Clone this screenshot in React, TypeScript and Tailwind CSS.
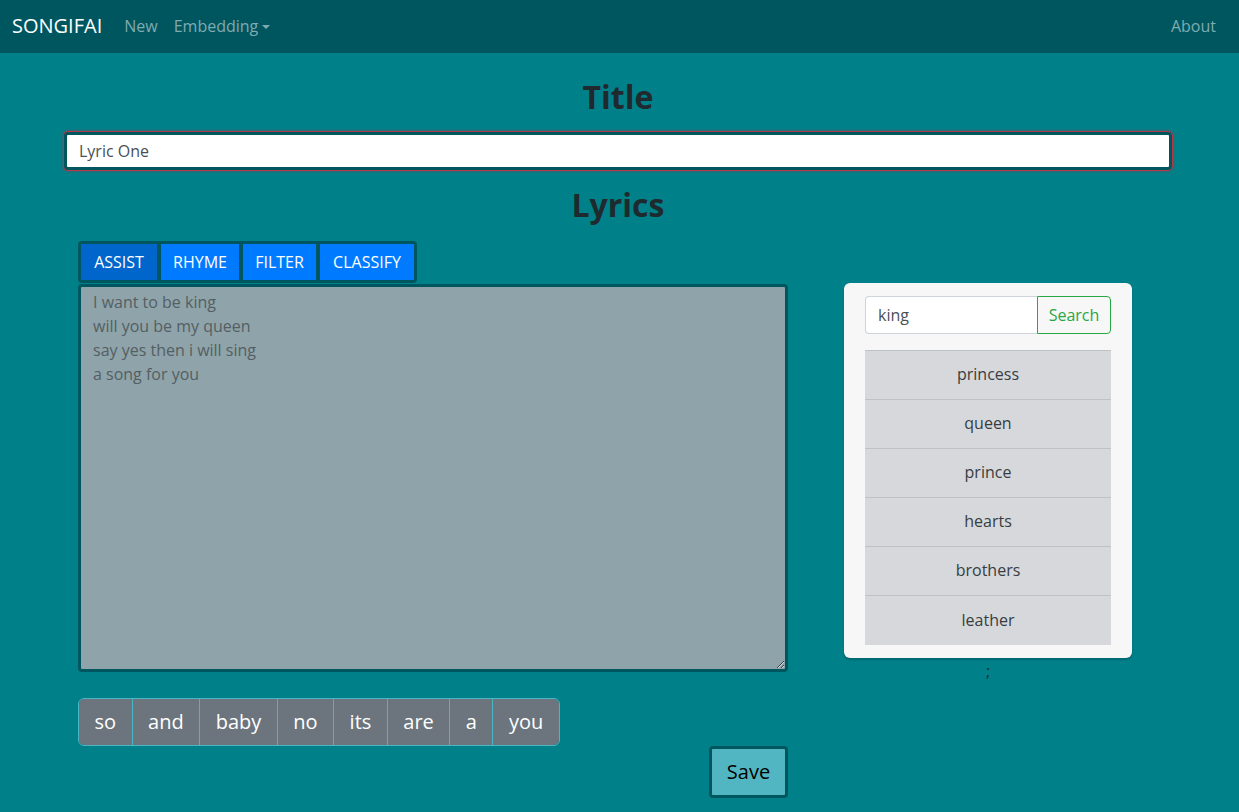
import { useState } from "react";

const similar = ["princess", "queen", "prince", "hearts", "brothers", "leather"];
const suggestions = ["so", "and", "baby", "no", "its", "are", "a", "you"];
const tabs = [
  { label: "ASSIST", w: "w-[76px]" },
  { label: "RHYME", w: "w-[78px]" },
  { label: "FILTER", w: "w-[73px]" },
  { label: "CLASSIFY", w: "w-[94px]" },
];

function NavBar() {
  return (
    <nav className="flex h-[53px] items-center justify-between bg-[#00565f] pb-[2px] pl-3 pr-[23px]">
      <div className="flex items-center">
        <span className="mr-[22px] text-xl text-white">SONGIFAI</span>
        <span className="mr-4 text-base text-[#7fabb0]">New</span>
        <span className="flex items-center text-base text-[#7fabb0]">
          Embedding
          <span className="ml-1 mt-[2px] h-0 w-0 border-x-4 border-t-4 border-x-transparent border-t-[#7fabb0]" />
        </span>
      </div>
      <span className="text-base text-[#7fabb0]">About</span>
    </nav>
  );
}

function App() {
  const [active] = useState("ASSIST");

  return (
    <div className="min-h-[812px] bg-[#00818a] font-['Open_Sans',sans-serif]">
      <NavBar />
      <main className="ml-[64px] w-[1108px] pt-[25px]">
        <h1 className="text-center text-[32px] font-bold leading-[38px] text-[#1f2a2e]">Title</h1>
        <input
          className="mt-[16px] h-[38px] w-full rounded border-[3px] border-[#00565f] bg-white px-3 text-base text-[#495057] shadow-[0_0_0_1px_#b23a48,0_0_3px_1px_rgba(200,35,51,0.6)] outline-none"
          defaultValue="Lyric One"
        />
        <h2 className="mt-[16px] text-center text-[32px] font-bold leading-[38px] text-[#1f2a2e]">Lyrics</h2>

        <div className="mt-[17px] flex">
          <div className="ml-[14px] w-[710px]">
            <div className="inline-flex gap-1 rounded border-[3px] border-[#00565f] bg-[#00565f]">
              {tabs.map((t) => (
                <button
                  key={t.label}
                  className={
                    (t.label === active ? "bg-[#0066cc] " : "bg-[#007bff] ") +
                    t.w +
                    " h-[36px] text-base text-white"
                  }
                >
                  {t.label}
                </button>
              ))}
            </div>
            <textarea
              className="mt-px block h-[388px] w-[710px] rounded border-[3px] border-[#00565f] bg-[#8fa3aa] px-3 py-[3px] text-base leading-6 text-[#545f63] outline-none"
              defaultValue={"I want to be king\nwill you be my queen\nsay yes then i will sing\na song for you"}
            />
            <div className="mt-[26px] inline-flex overflow-hidden rounded-md border border-[#4ab5c4]">
              {suggestions.map((w, i) => (
                <button
                  key={w}
                  className={
                    (i > 0 ? "border-l border-[#4ab5c4] " : "") +
                    "h-[46px] bg-[#6c757d] px-[15.5px] text-xl text-white"
                  }
                >
                  {w}
                </button>
              ))}
            </div>
            <div className="flex justify-end">
              <button className="h-[52px] w-[79px] rounded border-[3px] border-[#00565f] bg-[#52b6c2] text-xl text-black">
                Save
              </button>
            </div>
          </div>

          <div className="ml-[56px] mt-[42px] flex w-[288px] flex-col items-center">
            <div className="w-[288px] rounded-md bg-[#f7f7f7] px-[21px] pb-[13px] pt-[13px] shadow-[0_2px_2px_rgba(0,0,0,0.2)]">
              <div className="flex h-[38px]">
                <input
                  className="h-full w-[172px] rounded-l border border-r-0 border-[#ced4da] bg-white px-3 text-base text-[#495057] outline-none"
                  defaultValue="king"
                />
                <button className="h-full flex-1 rounded-r border border-[#28a745] text-base text-[#28a745]">
                  Search
                </button>
              </div>
              <ul className="mt-4 border-t border-[#bfc2c5]">
                {similar.map((s, i) => (
                  <li
                    key={s}
                    className={
                      (i < similar.length - 1 ? "border-b border-[#bfc2c5] " : "") +
                      "flex h-[49px] items-center justify-center pb-[2px] bg-[#d6d8db] text-base text-[#383d41]"
                    }
                  >
                    {s}
                  </li>
                ))}
              </ul>
            </div>
            <span className="mt-[1px] text-base text-[#1f2a2e]">;</span>
          </div>
        </div>
      </main>
    </div>
  );
}

export default App;
